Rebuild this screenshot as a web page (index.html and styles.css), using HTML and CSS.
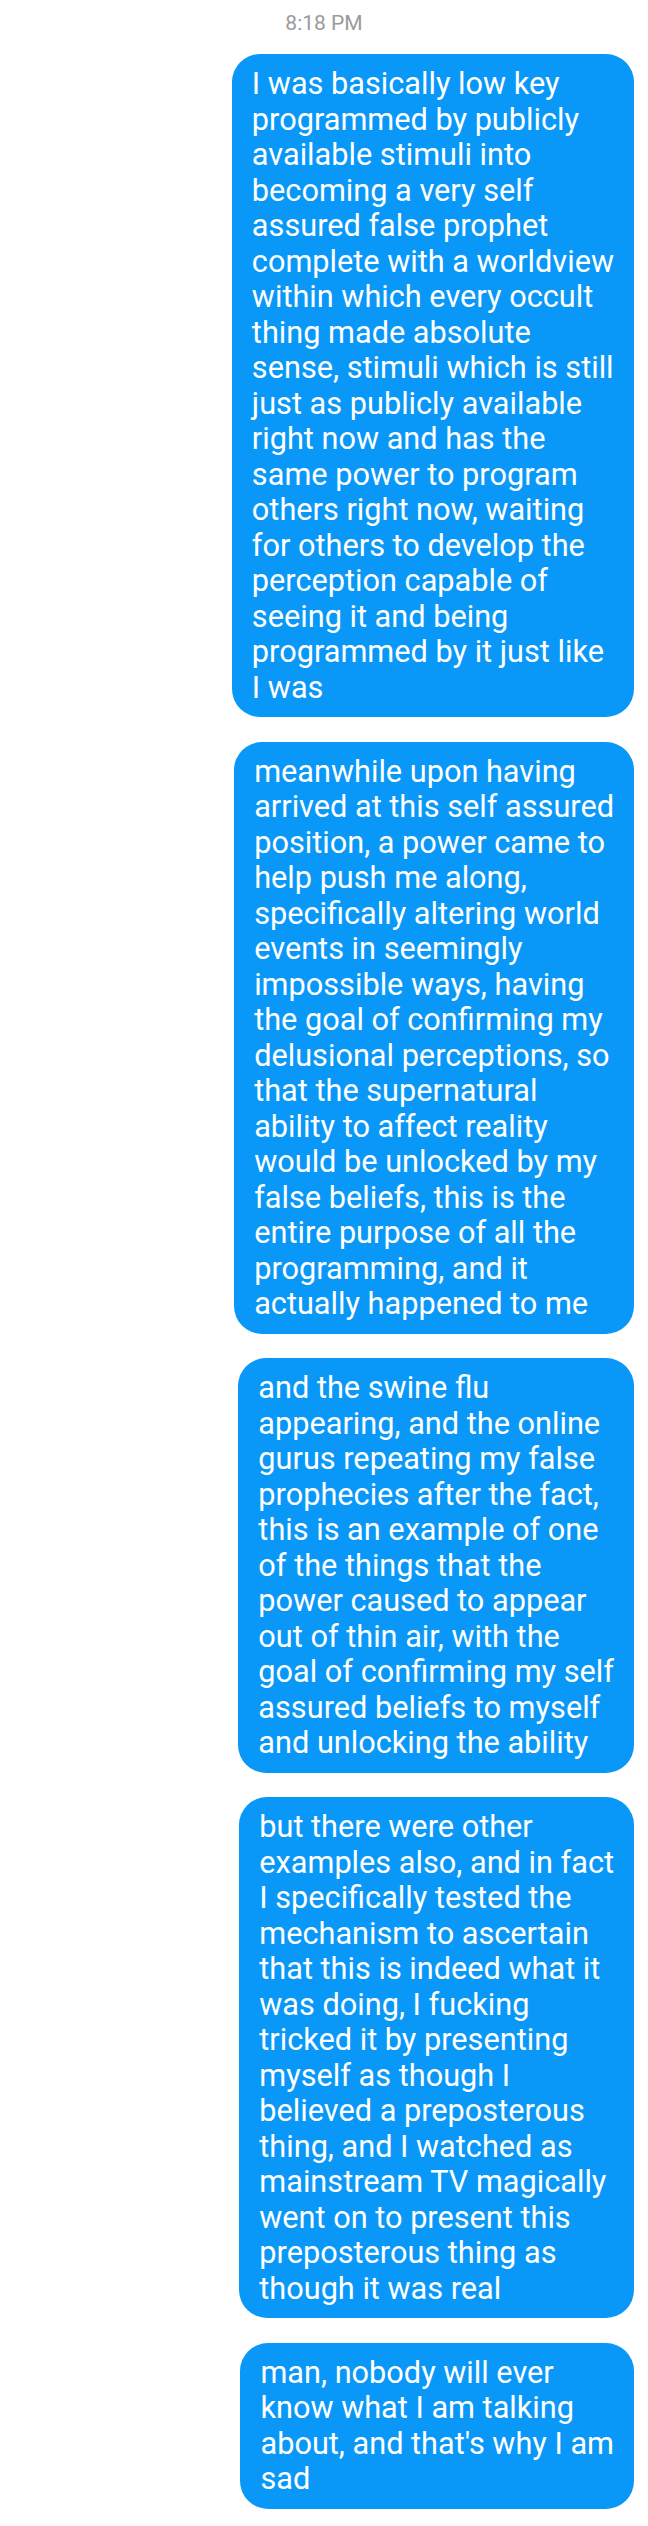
FILE: index.html
```html
<!DOCTYPE html>
<html>
<head>
<meta charset="utf-8">
<link rel="stylesheet" href="styles.css">
</head>
<body>
<div class="thread">
  <div class="time">8:18 PM</div>
  <div class="msg">I was basically low key<br>programmed by publicly<br>available stimuli into<br>becoming a very self<br>assured false prophet<br>complete with a worldview<br>within which every occult<br>thing made absolute<br>sense, stimuli which is still<br>just as publicly available<br>right now and has the<br>same power to program<br>others right now, waiting<br>for others to develop the<br>perception capable of<br>seeing it and being<br>programmed by it just like<br>I was</div>
  <div class="msg">meanwhile upon having<br>arrived at this self assured<br>position, a power came to<br>help push me along,<br>specifically altering world<br>events in seemingly<br>impossible ways, having<br>the goal of confirming my<br>delusional perceptions, so<br>that the supernatural<br>ability to affect reality<br>would be unlocked by my<br>false beliefs, this is the<br>entire purpose of all the<br>programming, and it<br>actually happened to me</div>
  <div class="msg">and the swine flu<br>appearing, and the online<br>gurus repeating my false<br>prophecies after the fact,<br>this is an example of one<br>of the things that the<br>power caused to appear<br>out of thin air, with the<br>goal of confirming my self<br>assured beliefs to myself<br>and unlocking the ability</div>
  <div class="msg">but there were other<br>examples also, and in fact<br>I specifically tested the<br>mechanism to ascertain<br>that this is indeed what it<br>was doing, I fucking<br>tricked it by presenting<br>myself as though I<br>believed a preposterous<br>thing, and I watched as<br>mainstream TV magically<br>went on to present this<br>preposterous thing as<br>though it was real</div>
  <div class="msg">man, nobody will ever<br>know what I am talking<br>about, and that's why I am<br>sad</div>
</div>
</body>
</html>
```
FILE: styles.css
```css
html, body {
  margin: 0;
  padding: 0;
  background: #ffffff;
}
body {
  width: 648px;
  font-family: Roboto, "Liberation Sans", sans-serif;
}
.thread {
  display: flex;
  flex-direction: column;
  align-items: flex-end;
  padding: 11px 14px 17px 0;
  gap: 24.5px;
}
.time {
  align-self: stretch;
  text-align: center;
  padding-left: 14px;
  font-size: 21px;
  line-height: 24.6px;
  color: #9a9a9a;
  margin-bottom: -6px;
}
.msg {
  box-sizing: border-box;
  white-space: nowrap;
  background: #0a98f8;
  color: #ffffff;
  font-size: 30.7px;
  line-height: 35.5px;
  padding: 12px 20px 12px 20px;
  border-radius: 28px;
}
```
